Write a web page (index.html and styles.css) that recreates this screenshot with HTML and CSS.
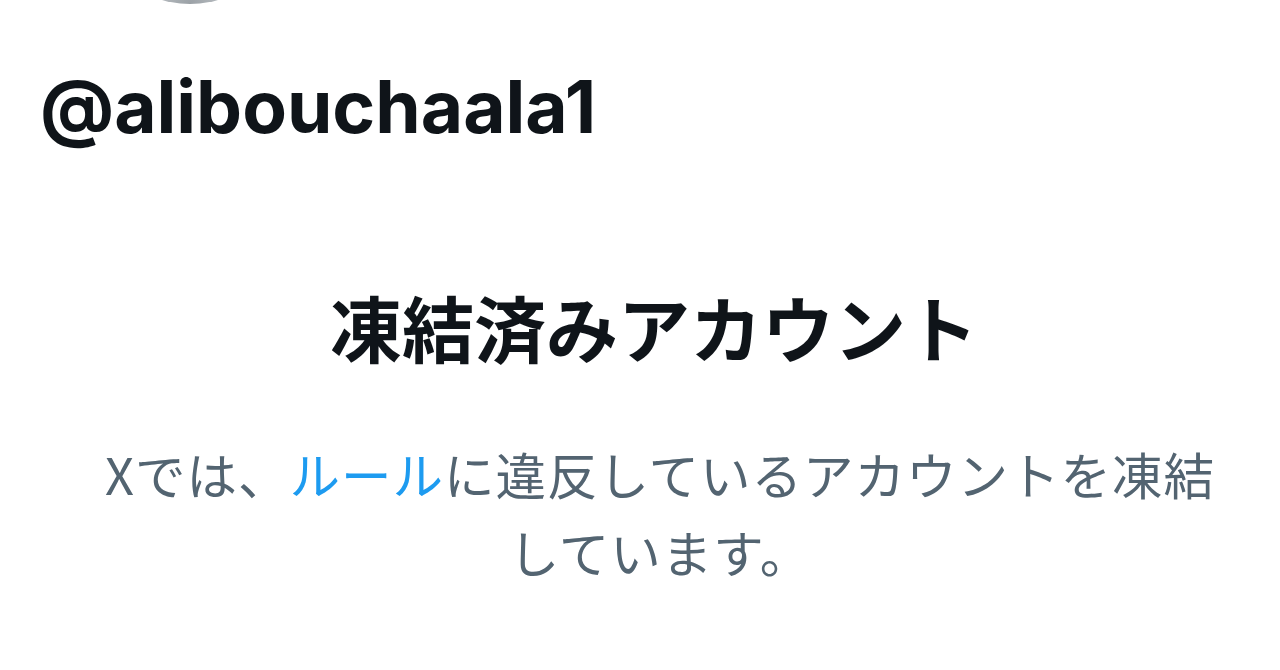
FILE: index.html
```html
<!DOCTYPE html>
<html lang="ja">
<head>
  <meta charset="UTF-8" />
  <meta name="viewport" content="width=device-width, initial-scale=1" />
  <title>@alibouchaala1 / X</title>
  <link rel="stylesheet" href="styles.css">
</head>
<body>

  <div class="profile-head">
    <div class="avatar"></div>
    <div class="handle">@alibouchaala1</div>
  </div>

  <!-- 凍結済みアカウントの案内 -->
  <div class="suspended">
    <h1 class="suspended-title">凍結済みアカウント</h1>
    <p class="suspended-text">Xでは、<a href="#" class="rules-link">ルール</a>に違反しているアカウントを凍結しています。</p>
  </div>

</body>
</html>
```

FILE: styles.css
```css
body {
  margin: 0;
  background-color: #ffffff;
  color: #0f1419;
  font-family: 'Inter', 'Noto Sans CJK JP', sans-serif;
  overflow: hidden;
}
.profile-head {
  padding-left: 40px;
}
.avatar {
  width: 200px;
  height: 200px;
  margin-top: -196px;
  margin-left: 50px;
  border-radius: 50%;
  background: radial-gradient(circle at 50% 100%, #9ba1a6 0, #d4d8db 30%, #f1f3f4 55%);
}
.handle {
  margin-top: 58px;
  font-size: 73px;
  line-height: 90px;
  font-weight: 700;
}
.suspended {
  padding-left: 28px;
  display: flex;
  flex-direction: column;
  align-items: center;
  text-align: center;
}
.suspended-title {
  margin: 129px 0 0;
  font-family: 'Noto Sans CJK JP', sans-serif;
  font-size: 72px;
  line-height: 90px;
  font-weight: 700;
  color: #0f1419;
}
.suspended-text {
  margin: 63px 0 0 12px;
  max-width: 1150px;
  font-family: 'Noto Sans CJK JP', sans-serif;
  font-size: 50.5px;
  line-height: 78px;
  letter-spacing: 1px;
  color: #536471;
}
.rules-link {
  color: #1d9bf0;
  text-decoration: none;
}
```
